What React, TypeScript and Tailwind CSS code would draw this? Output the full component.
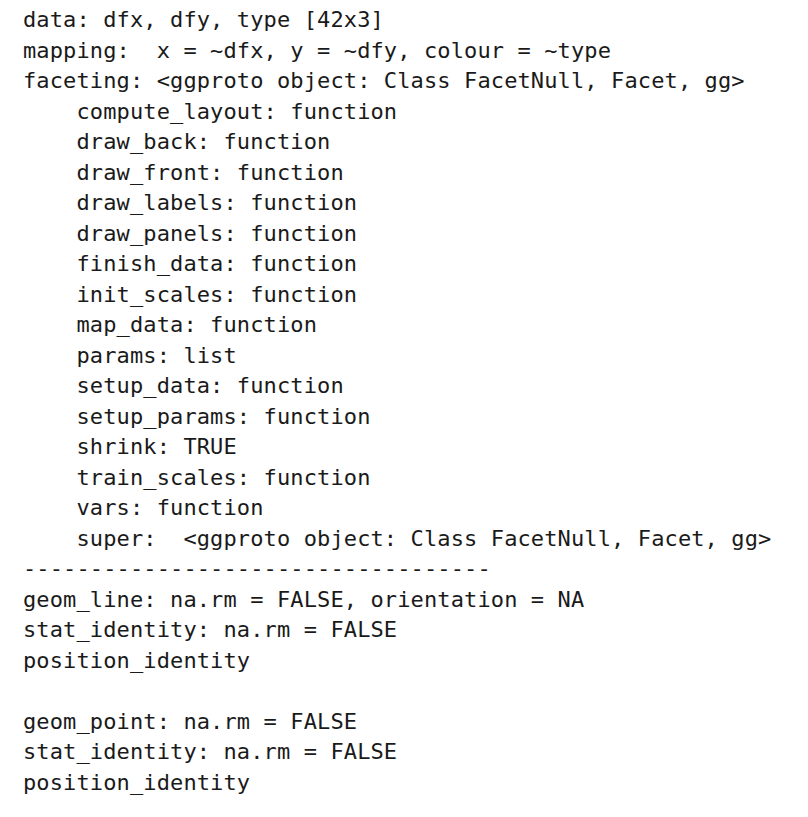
import React from 'react';

const lines = [
  'data: dfx, dfy, type [42x3]',
  'mapping:  x = ~dfx, y = ~dfy, colour = ~type',
  'faceting: <ggproto object: Class FacetNull, Facet, gg>',
  '    compute_layout: function',
  '    draw_back: function',
  '    draw_front: function',
  '    draw_labels: function',
  '    draw_panels: function',
  '    finish_data: function',
  '    init_scales: function',
  '    map_data: function',
  '    params: list',
  '    setup_data: function',
  '    setup_params: function',
  '    shrink: TRUE',
  '    train_scales: function',
  '    vars: function',
  '    super:  <ggproto object: Class FacetNull, Facet, gg>',
  '-----------------------------------',
  'geom_line: na.rm = FALSE, orientation = NA',
  'stat_identity: na.rm = FALSE',
  'position_identity',
  '',
  'geom_point: na.rm = FALSE',
  'stat_identity: na.rm = FALSE',
  'position_identity',
];

const App: React.FC = () => {
  return (
    <div className="min-h-[817px] w-full bg-white">
      <pre className="pl-[23px] pt-[5px] font-['DejaVu_Sans_Mono',monospace] text-[22px] tracking-[0.12px] leading-[30.5px] text-[#1a1a1a] whitespace-pre">
        {lines.map((l, i) => (
          <div key={i} className="h-[30.5px]">{l}</div>
        ))}
      </pre>
    </div>
  );
};

export default App;
